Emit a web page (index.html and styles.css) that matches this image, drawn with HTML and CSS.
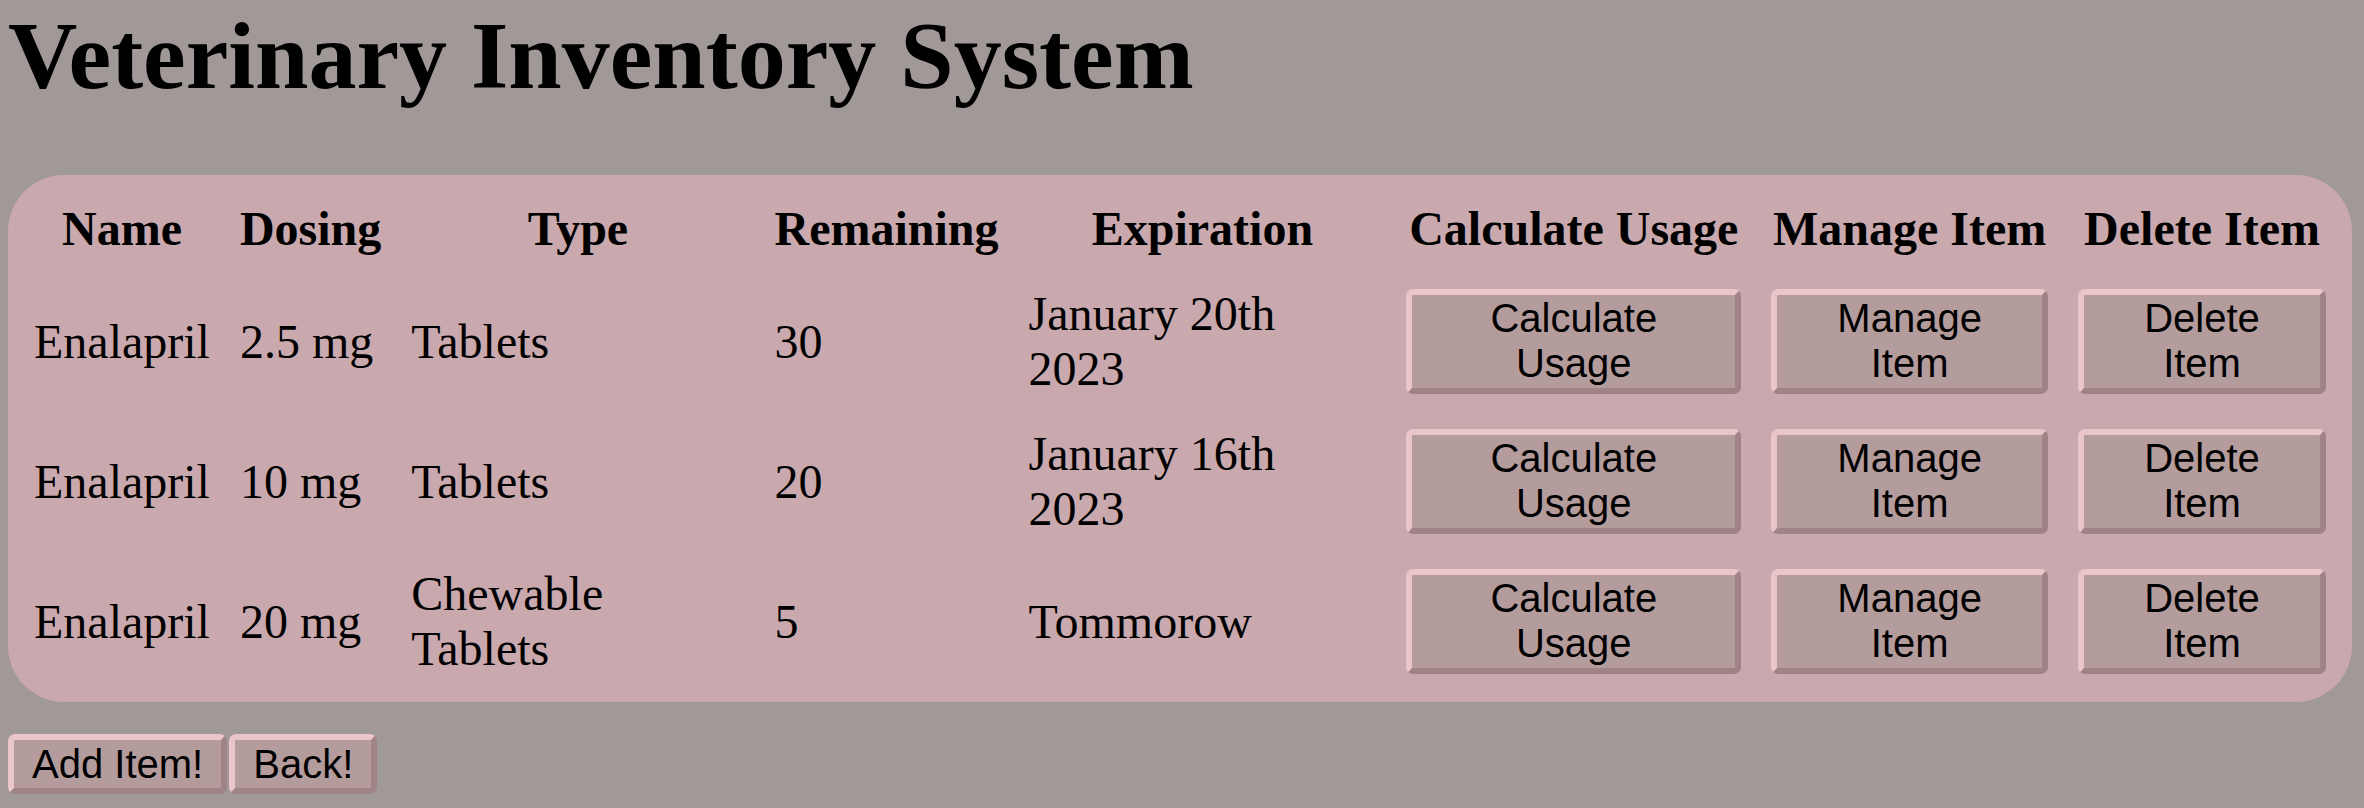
FILE: index.html
```html
<!DOCTYPE html>
<html lang="en">
<head>
<meta charset="utf-8">
<title>Veterinary Inventory System</title>
<link rel="stylesheet" href="styles.css">
</head>
<body>
<h1 class="title">Veterinary Inventory System</h1>
<div class="panel">
  <table class="inventory">
    <thead>
      <tr>
        <th>Name</th>
        <th>Dosing</th>
        <th>Type</th>
        <th>Remaining</th>
        <th>Expiration</th>
        <th>Calculate Usage</th>
        <th>Manage Item</th>
        <th>Delete Item</th>
      </tr>
    </thead>
    <tbody>
      <tr>
        <td>Enalapril</td>
        <td>2.5 mg</td>
        <td>Tablets</td>
        <td>30</td>
        <td>January 20th 2023</td>
        <td><button class="btn btn-cell">Calculate Usage</button></td>
        <td><button class="btn btn-cell">Manage Item</button></td>
        <td><button class="btn btn-cell">Delete Item</button></td>
      </tr>
      <tr>
        <td>Enalapril</td>
        <td>10 mg</td>
        <td>Tablets</td>
        <td>20</td>
        <td>January 16th 2023</td>
        <td><button class="btn btn-cell">Calculate Usage</button></td>
        <td><button class="btn btn-cell">Manage Item</button></td>
        <td><button class="btn btn-cell">Delete Item</button></td>
      </tr>
      <tr>
        <td>Enalapril</td>
        <td>20 mg</td>
        <td>Chewable Tablets</td>
        <td>5</td>
        <td>Tommorow</td>
        <td><button class="btn btn-cell">Calculate Usage</button></td>
        <td><button class="btn btn-cell">Manage Item</button></td>
        <td><button class="btn btn-cell">Delete Item</button></td>
      </tr>
    </tbody>
  </table>
</div>
<div class="actions">
  <button class="btn">Add Item!</button>
  <button class="btn">Back!</button>
</div>
</body>
</html>
```
FILE: styles.css
```css
html, body {
  background: #a19997;
}

body {
  margin: 0 8px;
  font-family: "Liberation Serif", "Times New Roman", serif;
  color: #000;
}

.title {
  font-size: 96px;
  font-weight: bold;
  line-height: normal;
  margin: 0 0 64.3px 0;
}

.panel {
  background: #c9a9ad;
  border-radius: 56px;
  padding: 10px;
  margin-right: 4px;
}

.inventory {
  width: 100%;
  border-collapse: separate;
  border-spacing: 2px;
  font-size: 48px;
}

.inventory th {
  font-weight: bold;
  text-align: center;
  padding: 14px;
}

.inventory td {
  text-align: left;
  vertical-align: middle;
  padding: 14px;
}

.btn {
  font-family: "Liberation Sans", Arial, sans-serif;
  font-size: 40px;
  line-height: normal;
  color: #000;
  background: #b59c9c;
  border-width: 6px;
  border-style: solid;
  border-color: #eac6cb #9f8386 #9f8386 #eac6cb;
  border-radius: 7px;
  padding: 1.5px 18px;
  margin: 0;
}

.btn-cell {
  width: 100%;
  display: block;
}

.actions {
  display: flex;
  gap: 2px;
  margin-top: 32px;
}
```
